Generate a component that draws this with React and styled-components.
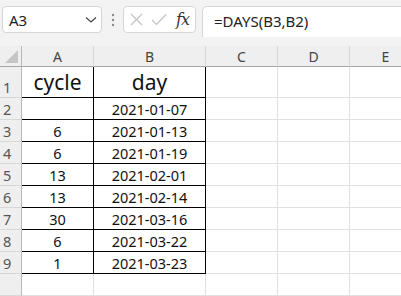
import React from "react";
import styled, { createGlobalStyle } from "styled-components";

const Global = createGlobalStyle`
  html, body { margin: 0; padding: 0; }
  body {
    background: #f3f3f3;
    overflow: hidden;
    width: 401px;
    height: 296px;
    font-family: "Noto Sans", "Open Sans", sans-serif;
  }
`;

const Page = styled.div`
  width: 401px;
  height: 296px;
  overflow: hidden;
  display: flex;
  flex-direction: column;
`;

const Toolbar = styled.div`
  display: flex;
  align-items: flex-start;
  padding: 6px 0 0 2px;
  height: 49px;
  overflow: hidden;
  & > * { flex-shrink: 0; }
`;

const NameBox = styled.div`
  box-sizing: border-box;
  width: 100px;
  height: 27px;
  background: #fff;
  border: 1px solid #d6d6d6;
  border-radius: 4px;
  display: flex;
  align-items: center;
  justify-content: space-between;
  padding: 0 4px 0 6px;
  font-size: 15px;
  color: #222;
`;

const Dots = styled.div`
  width: 21px;
  height: 27px;
  display: flex;
  align-items: center;
  justify-content: center;
`;

const FxBox = styled.div`
  box-sizing: border-box;
  width: 73px;
  height: 27px;
  background: #fff;
  border: 1px solid #d6d6d6;
  border-radius: 4px;
  display: flex;
  align-items: center;
  padding: 0 0 0 6px;
  gap: 8px;
`;

const Fx = styled.span`
  font-family: "DejaVu Serif", "Liberation Serif", serif;
  font-style: italic;
  font-size: 16px;
  color: #333;
  margin-left: 1px;
  letter-spacing: -1px;
`;

const Formula = styled.div`
  box-sizing: border-box;
  margin-left: 6px;
  width: 230px;
  height: 49px;
  background: #fff;
  border: 1px solid #d6d6d6;
  border-radius: 5px;
  padding: 4px 0 0 11px;
  font-size: 15px;
  color: #222;
`;

const Sheet = styled.div`
  margin-top: 9px;
  display: grid;
  grid-template-columns: 22px 72px 112px 72px 72px 72px;
  grid-template-rows: 21px 31px repeat(9, 22px);
`;

const Corner = styled.div`
  box-sizing: border-box;
  background: #efefef;
  border-right: 1px solid #b8b8b8;
  border-bottom: 1px solid #a6a6a6;
  position: relative;
`;

const Tri = styled.div`
  position: absolute;
  right: 3px;
  bottom: 3px;
  width: 0;
  height: 0;
  border-left: 13px solid transparent;
  border-bottom: 13px solid #c6c6c6;
`;

const ColHead = styled.div`
  box-sizing: border-box;
  background: #efefef;
  border-right: 1px solid #d8d8d8;
  border-bottom: 1px solid #a6a6a6;
  display: flex;
  align-items: center;
  justify-content: center;
  font-size: 14px;
  color: #444;
  padding-top: 1px;
`;

const RowHead = styled.div`
  box-sizing: border-box;
  background: #efefef;
  border-right: 1px solid #b8b8b8;
  border-bottom: 1px solid #d8d8d8;
  display: flex;
  align-items: flex-end;
  padding: 0 0 0 3px;
  font-size: 14.5px;
  line-height: 20px;
  color: #555;
`;

const Cell = styled.div`
  box-sizing: border-box;
  background: #fff;
  border-right: 1px solid ${(p) => (p.$boxed ? "#000" : "#e0e0e0")};
  border-bottom: 1px solid ${(p) => (p.$boxed ? "#000" : "#e0e0e0")};
  display: flex;
  align-items: flex-end;
  justify-content: center;
  font-size: ${(p) => (p.$big ? "21px" : "14.5px")};
  line-height: ${(p) => (p.$big ? "30px" : "20px")};
  color: #111;
  white-space: nowrap;
`;

const data = [
  ["", "2021-01-07"],
  ["6", "2021-01-13"],
  ["6", "2021-01-19"],
  ["13", "2021-02-01"],
  ["13", "2021-02-14"],
  ["30", "2021-03-16"],
  ["6", "2021-03-22"],
  ["1", "2021-03-23"],
];

const cols = ["A", "B", "C", "D", "E"];

export default function App() {
  return (
    <Page>
      <Global />
      <Toolbar>
        <NameBox>
          <span>A3</span>
          <svg width="12" height="8" viewBox="0 0 12 8">
            <path d="M1 1.5 L6 6 L11 1.5" fill="none" stroke="#444" strokeWidth="1.2" />
          </svg>
        </NameBox>
        <Dots>
          <svg width="4" height="14" viewBox="0 0 4 14">
            <circle cx="2" cy="2" r="1.2" fill="#8a8a8a" />
            <circle cx="2" cy="7" r="1.2" fill="#8a8a8a" />
            <circle cx="2" cy="12" r="1.2" fill="#8a8a8a" />
          </svg>
        </Dots>
        <FxBox>
          <svg width="13" height="13" viewBox="0 0 13 13">
            <path d="M1 1 L12 12 M12 1 L1 12" stroke="#c2c2c2" strokeWidth="1.2" fill="none" />
          </svg>
          <svg width="16" height="13" viewBox="0 0 16 13">
            <path d="M1 7 L5.5 11.5 L15 1.5" stroke="#c2c2c2" strokeWidth="1.2" fill="none" />
          </svg>
          <Fx>fx</Fx>
        </FxBox>
        <Formula>=DAYS(B3,B2)</Formula>
      </Toolbar>
      <Sheet>
        <Corner>
          <Tri />
        </Corner>
        {cols.map((c) => (
          <ColHead key={c}>{c}</ColHead>
        ))}
        <RowHead>1</RowHead>
        <Cell $boxed $big>cycle</Cell>
        <Cell $boxed $big>day</Cell>
        <Cell />
        <Cell />
        <Cell />
        {data.map((r, i) => (
          <React.Fragment key={i}>
            <RowHead>{i + 2}</RowHead>
            <Cell $boxed>{r[0]}</Cell>
            <Cell $boxed>{r[1]}</Cell>
            <Cell />
            <Cell />
            <Cell />
          </React.Fragment>
        ))}
        <RowHead />
        <Cell />
        <Cell />
        <Cell />
        <Cell />
        <Cell />
      </Sheet>
    </Page>
  );
}
